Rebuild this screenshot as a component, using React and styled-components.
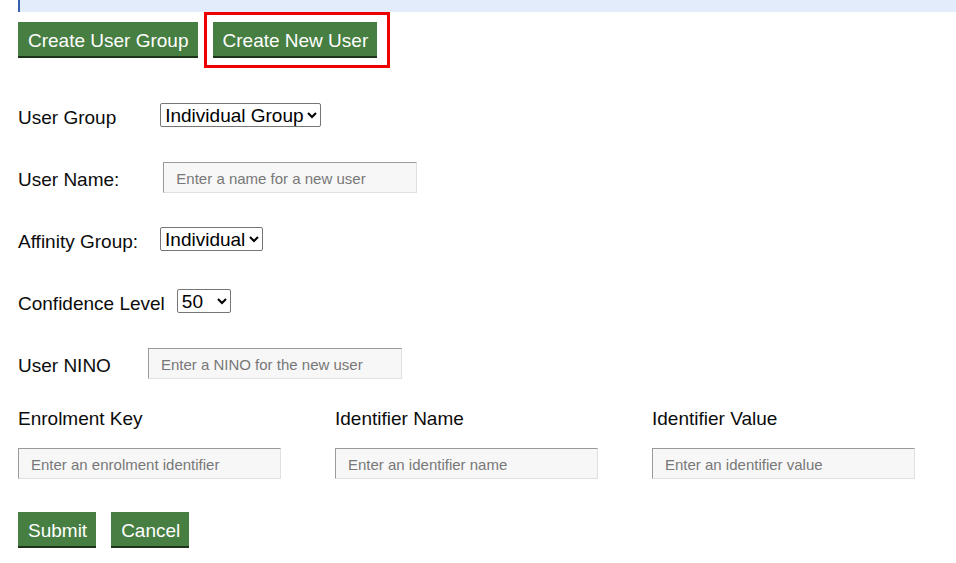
import React, { useState } from 'react';
import styled, { createGlobalStyle } from 'styled-components';

const GlobalStyle = createGlobalStyle`
  body {
    margin: 0;
    background: #fff;
    font-family: 'Liberation Sans', Arial, sans-serif;
    color: #0b0c0c;
  }
`;

const confidenceLevels = [0, 50, 100, 200, 250];

const App = () => {
  const [confidence, setConfidence] = useState('50');

  return (
    <>
      <GlobalStyle />
      <Page>
        <Banner />
        <ActionBar>
          <GreenButton type="button">Create User Group</GreenButton>
          <Highlight>
            <GreenButton type="button">Create New User</GreenButton>
          </Highlight>
        </ActionBar>

        <Form onSubmit={e => e.preventDefault()}>
          <FieldRow gap={44}>
            <Label htmlFor="userGroup">User Group</Label>
            <Select id="userGroup" defaultValue="individual">
              <option value="individual">Individual Group</option>
            </Select>
          </FieldRow>

          <FieldRow gap={44}>
            <Label htmlFor="userName">User Name:</Label>
            <TextInput
              id="userName"
              width={254}
              placeholder="Enter a name for a new user"
            />
          </FieldRow>

          <FieldRow gap={22}>
            <Label htmlFor="affinity">Affinity Group:</Label>
            <Select id="affinity" defaultValue="Individual">
              <option>Individual</option>
              <option>Agent</option>
            </Select>
          </FieldRow>

          <FieldRow gap={12}>
            <Label htmlFor="confidence">Confidence Level</Label>
            <Select
              id="confidence"
              value={confidence}
              onChange={e => setConfidence(e.target.value)}
            >
              {confidenceLevels.map(level => (
                <option key={level} value={level}>
                  {level}
                </option>
              ))}
            </Select>
          </FieldRow>

          <FieldRow gap={37}>
            <Label htmlFor="nino">User NINO</Label>
            <TextInput
              id="nino"
              width={254}
              placeholder="Enter a NINO for the new user"
            />
          </FieldRow>

          <IdentifierGrid>
            <Column>
              <Label htmlFor="enrolmentKey">Enrolment Key</Label>
              <TextInput
                id="enrolmentKey"
                width={263}
                placeholder="Enter an enrolment identifier"
              />
            </Column>
            <Column>
              <Label htmlFor="identifierName">Identifier Name</Label>
              <TextInput
                id="identifierName"
                width={263}
                placeholder="Enter an identifier name"
              />
            </Column>
            <Column>
              <Label htmlFor="identifierValue">Identifier Value</Label>
              <TextInput
                id="identifierValue"
                width={263}
                placeholder="Enter an identifier value"
              />
            </Column>
          </IdentifierGrid>

          <FormActions>
            <GreenButton type="submit">Submit</GreenButton>
            <GreenButton type="button">Cancel</GreenButton>
          </FormActions>
        </Form>
      </Page>
    </>
  );
};

const Page = styled.div`
  padding-left: 18px;
`;

const Banner = styled.div`
  height: 12px;
  background: #e2ecfb;
  border-left: 2px solid #3560ad;
`;

const ActionBar = styled.div`
  display: flex;
  align-items: center;
  gap: 6px;
`;

const Highlight = styled.div`
  display: flex;
  border: 3px solid #ee0000;
  padding: 7px 10px 7px 6px;
`;

const GreenButton = styled.button`
  font-family: 'Liberation Sans', Arial, sans-serif;
  font-size: 19px;
  line-height: 22px;
  color: #fff;
  background: #477e41;
  border: none;
  border-bottom: 2px solid #1c3319;
  border-radius: 0;
  padding: 8px 9px 4px 10px;
  cursor: pointer;
  &:hover {
    background: #3e7038;
  }
`;

const Form = styled.form`
  display: flex;
  flex-direction: column;
  margin-top: 32px;
`;

const FieldRow = styled.div`
  display: flex;
  align-items: center;
  height: 31px;
  margin-bottom: 31px;
  gap: ${({ gap }) => gap}px;
  & > label {
    padding-top: 5px;
  }
`;

const Label = styled.label`
  font-size: 19px;
  line-height: 22px;
  color: #0b0c0c;
`;

const Select = styled.select`
  font-family: 'Liberation Sans', Arial, sans-serif;
  font-size: 19px;
  color: #000;
  background: #fff;
  border: 1px solid #767676;
  border-radius: 2px;
  height: 24px;
  padding: 0;
  margin-top: -2px;
`;

const TextInput = styled.input`
  box-sizing: border-box;
  width: ${({ width }) => width}px;
  height: 31px;
  font-family: 'Liberation Sans', Arial, sans-serif;
  font-size: 15px;
  color: #0b0c0c;
  background: #f7f7f7;
  border: 1px solid;
  border-color: #9a9a9a #e0e0e0 #e0e0e0 #9a9a9a;
  padding: 2px 12px 0;
  &::placeholder {
    color: #777;
  }
  &:focus {
    outline: 2px solid #ffbf47;
  }
`;

const IdentifierGrid = styled.div`
  display: grid;
  grid-template-columns: repeat(3, 317px);
  margin-top: -2px;
`;

const Column = styled.div`
  display: flex;
  flex-direction: column;
  align-items: flex-start;
  gap: 18px;
`;

const FormActions = styled.div`
  display: flex;
  gap: 15px;
  margin-top: 33px;
`;

export default App;
